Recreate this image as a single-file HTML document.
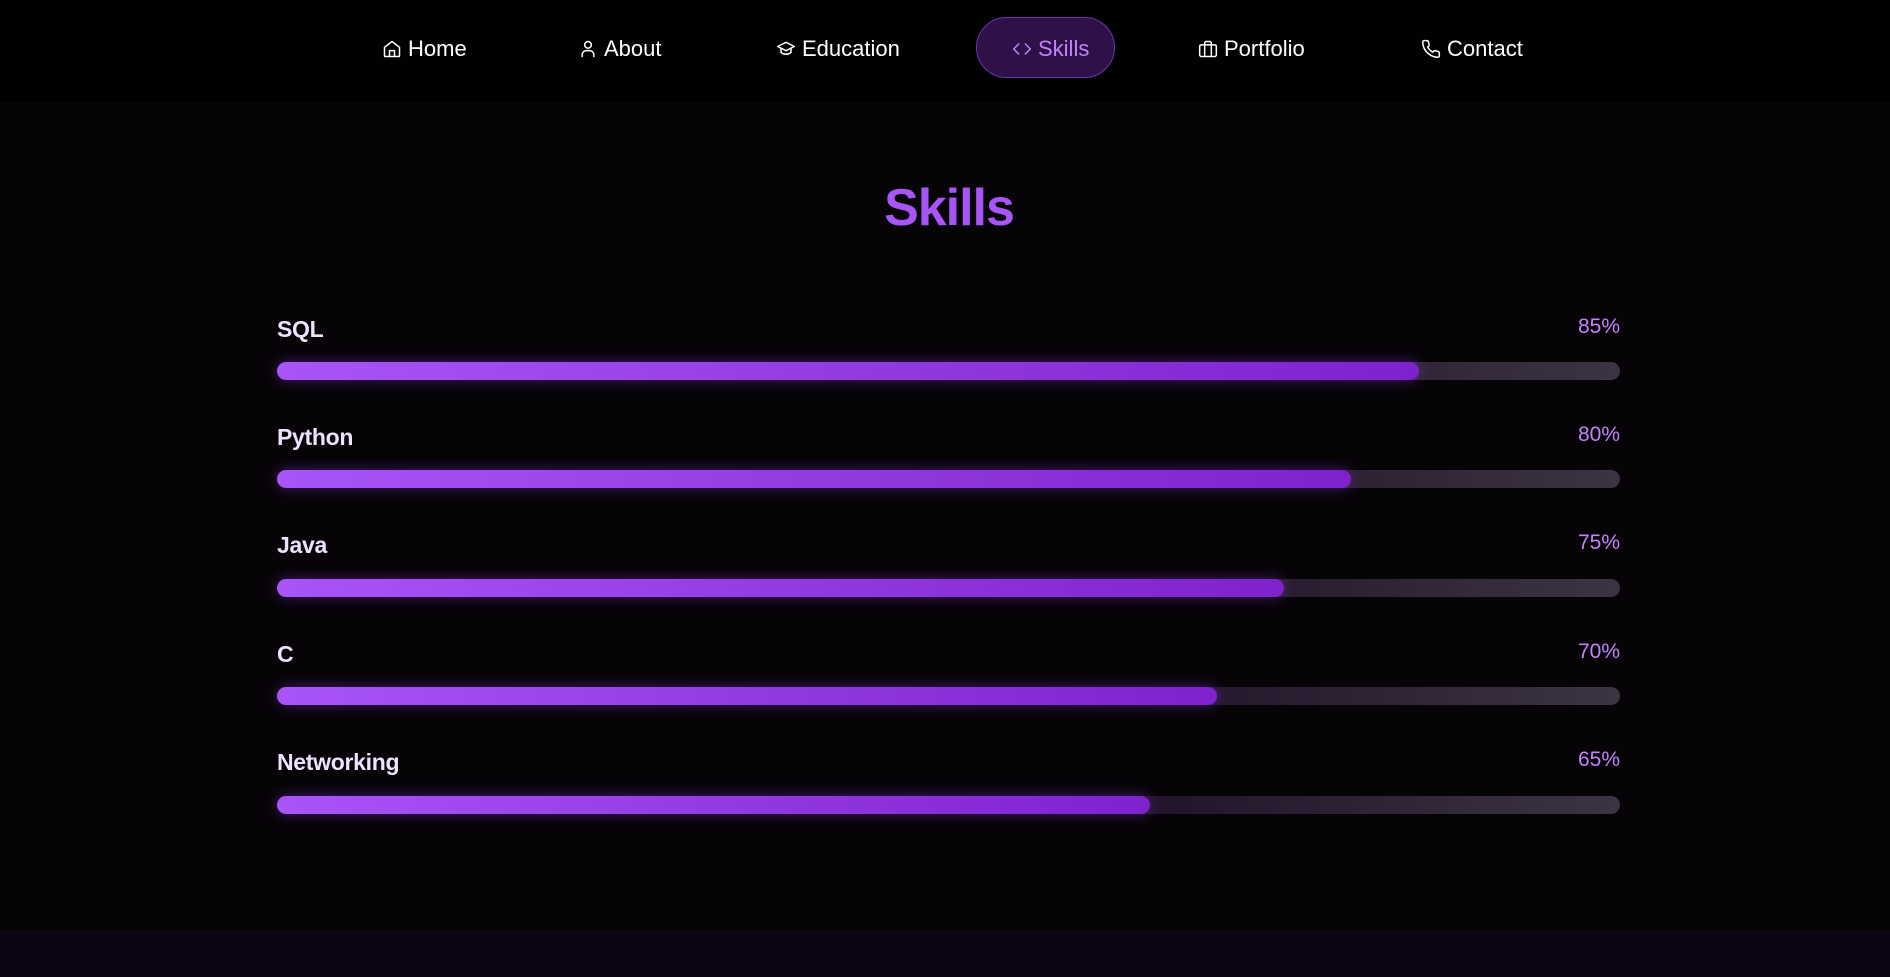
<!DOCTYPE html>
<html><head><meta charset="utf-8"><style>
*{margin:0;padding:0;box-sizing:border-box}
body{width:1890px;height:977px;overflow:hidden;background:#060406;font-family:"Liberation Sans",sans-serif;position:relative}
.nav{position:absolute;left:0;top:0;width:1890px;height:102px;background:#020102}
.ni{position:absolute;top:49px;transform:translateY(-50%);color:#fff;font-size:22px;display:flex;align-items:center;gap:6px}
.ni svg{width:20px;height:20px;fill:none;stroke:#fff;stroke-width:1.8;stroke-linecap:round;stroke-linejoin:round}
.pill{position:absolute;left:976px;top:17px;width:139px;height:61px;border-radius:31px;background:#2d1148;border:1px solid #6b34a8}
h1{position:absolute;left:0;width:1898px;top:178px;text-align:center;color:#a855f7;font-size:52px;font-weight:bold;letter-spacing:-1px}
.lab{position:absolute;left:277px;color:#eee2ff;font-size:23px;font-weight:bold;letter-spacing:-0.3px}
.pct{position:absolute;right:270px;color:#c084fc;font-size:21px}
.track{position:absolute;left:277px;width:1343px;height:18px;border-radius:9px;background:linear-gradient(90deg,#1a0d24 0%,#1e1026 60%,#3c3442 100%)}
.fill{height:18px;border-radius:9px;background:linear-gradient(90deg,#a855f7,#7e22ce);box-shadow:0 0 14px rgba(147,51,234,.45)}
.foot{position:absolute;left:0;top:930px;width:1890px;height:47px;background:#0c0614}
</style></head><body>
<div class="nav">
<div class="pill"></div>
<div class="ni" style="left:382px"><svg viewBox="0 0 24 24"><path d="M3 10l9-7 9 7v10a1 1 0 0 1-1 1H4a1 1 0 0 1-1-1z"/><path d="M9 21v-7h6v7"/></svg>Home</div>
<div class="ni" style="left:578px"><svg viewBox="0 0 24 24"><circle cx="12" cy="7" r="4"/><path d="M5 21v-2a5 5 0 0 1 5-5h4a5 5 0 0 1 5 5v2"/></svg>About</div>
<div class="ni" style="left:776px"><svg viewBox="0 0 24 24"><path d="M2 9l10-5 10 5-10 5z"/><path d="M6 11v5c3 3 9 3 12 0v-5"/></svg>Education</div>
<div class="ni" style="left:1012px;color:#c084fc"><svg viewBox="0 0 24 24" style="stroke:#c084fc"><path d="M8 6l-6 6 6 6M16 6l6 6-6 6"/></svg>Skills</div>
<div class="ni" style="left:1198px"><svg viewBox="0 0 24 24"><rect x="2" y="7" width="20" height="14" rx="2"/><path d="M16 21V5a2 2 0 0 0-2-2h-4a2 2 0 0 0-2 2v16"/></svg>Portfolio</div>
<div class="ni" style="left:1421px"><svg viewBox="0 0 24 24"><path d="M22 17v3a2 2 0 0 1-2 2A19 19 0 0 1 2 4a2 2 0 0 1 2-2h3a2 2 0 0 1 2 1.7c.1 1 .4 1.9.7 2.8a2 2 0 0 1-.5 2.1L8 9.8a16 16 0 0 0 6 6l1.3-1.3a2 2 0 0 1 2.1-.4c.9.3 1.8.6 2.8.7A2 2 0 0 1 22 17z"/></svg>Contact</div>
</div>
<h1>Skills</h1>
<div class="lab" style="top:316px">SQL</div><div class="pct" style="top:315px">85%</div>
<div class="track" style="top:362px"><div class="fill" style="width:85%"></div></div>
<div class="lab" style="top:424px">Python</div><div class="pct" style="top:423px">80%</div>
<div class="track" style="top:470px"><div class="fill" style="width:80%"></div></div>
<div class="lab" style="top:532px">Java</div><div class="pct" style="top:531px">75%</div>
<div class="track" style="top:579px"><div class="fill" style="width:75%"></div></div>
<div class="lab" style="top:641px">C</div><div class="pct" style="top:640px">70%</div>
<div class="track" style="top:687px"><div class="fill" style="width:70%"></div></div>
<div class="lab" style="top:749px">Networking</div><div class="pct" style="top:748px">65%</div>
<div class="track" style="top:796px"><div class="fill" style="width:65%"></div></div>
<div class="foot"></div>
</body></html>
